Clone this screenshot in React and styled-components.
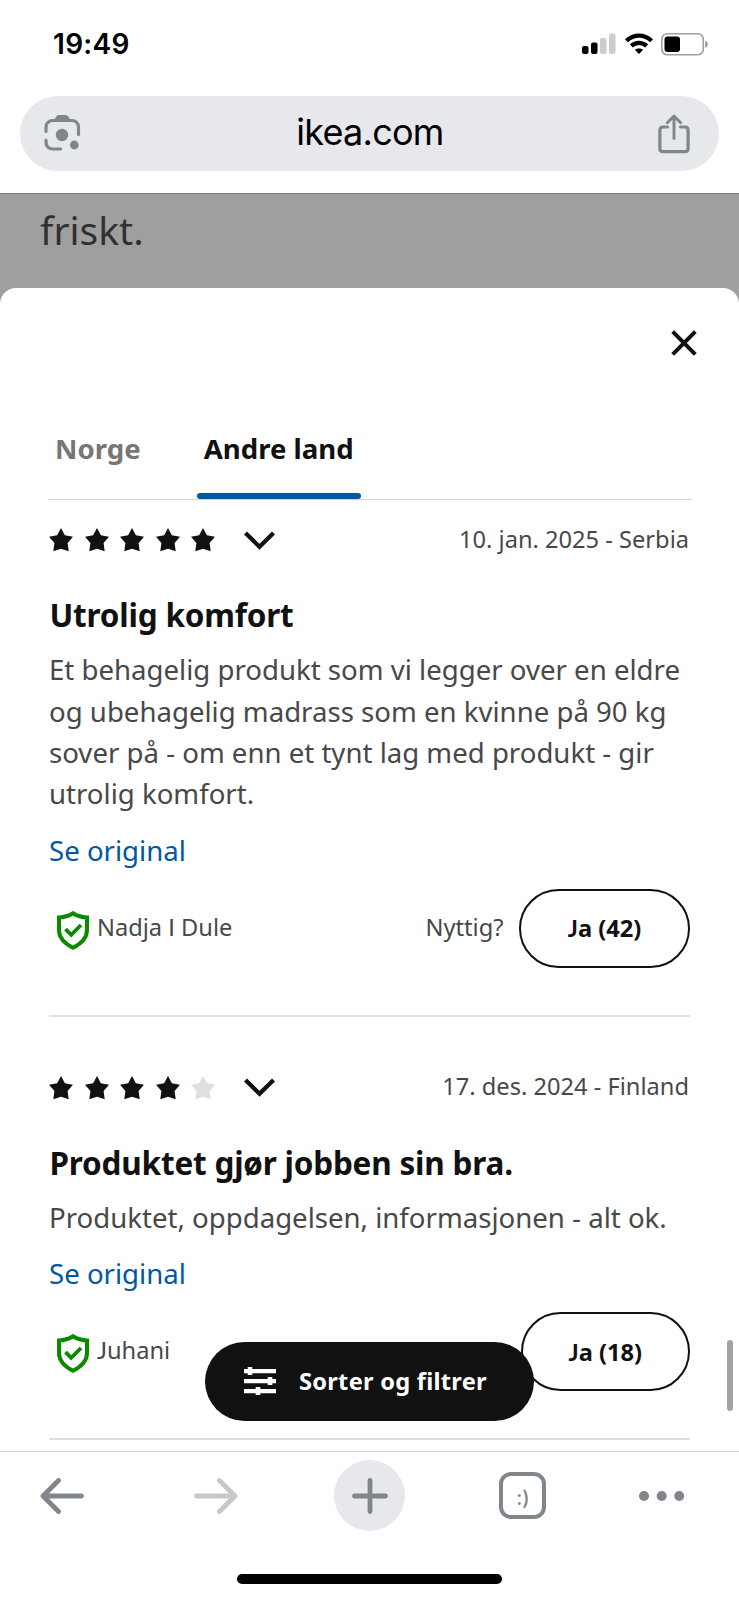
import React from "react";
import styled, { createGlobalStyle } from "styled-components";

const GlobalStyle = createGlobalStyle`
  * { box-sizing: border-box; }
  body { margin: 0; background: #fff; }
  button { font: inherit; border: 0; padding: 0; background: none; color: inherit; }
  svg { display: block; flex: none; }
`;

const Screen = styled.div`
  width: 739px;
  height: 1600px;
  display: flex;
  flex-direction: column;
  overflow: hidden;
  background: #fff;
  font-family: "Noto Sans", sans-serif;
  color: #111;
`;

const StatusBar = styled.header`
  height: 96px;
  flex: none;
  display: flex;
  justify-content: space-between;
  align-items: flex-start;
  padding: 27px 30px 0 53px;
`;

const Clock = styled.span`
  font: 600 28px/35px Inter, sans-serif;
  letter-spacing: 0.3px;
  color: #000;
`;

const StatusIcons = styled.div`
  display: flex;
  gap: 8.5px;
  padding-top: 6px;
`;

const AddressBar = styled.div`
  height: 75px;
  flex: none;
  margin: 0 20px 22px;
  padding: 0 29px 0 22px;
  border-radius: 38px;
  background: #e6e8ec;
  display: flex;
  align-items: center;
  justify-content: space-between;
`;

const Host = styled.span`
  font: 400 36px/44px Inter, sans-serif;
  letter-spacing: -0.75px;
  padding-bottom: 3px;
  color: #000;
`;

const Viewport = styled.main`
  position: relative;
  flex: 1;
  min-height: 0;
  overflow: hidden;
  background: #9f9f9f;
  border-top: 1px solid #808080;
`;

const Backdrop = styled.div`
  height: 93.5px;
  padding: 9px 40px 0;
  font-size: 39px;
  line-height: 54px;
  color: #313131;
`;

const Sheet = styled.section`
  height: 1200px;
  background: #fff;
  border-radius: 16px 16px 0 0;
  padding: 42.5px 49px 0;
`;

const SheetHeader = styled.div`
  display: flex;
  justify-content: flex-end;
  margin-right: -7px;
  height: 86px;
`;

const Tabs = styled.nav`
  display: flex;
  gap: 49px;
  height: 84px;
  margin: 0 -2px 0 -1px;
  border-bottom: 1.5px solid #d6d6d6;
`;

const Tab = styled.button`
  position: relative;
  padding: 11px 7px 0;
  height: 82.5px;
  display: flex;
  align-items: flex-start;
  font-size: 27.6px;
  line-height: 42px;
  font-weight: 700;
  color: ${(p) => (p.$active ? "#111" : "#767676")};
  &::after {
    content: "";
    display: ${(p) => (p.$active ? "block" : "none")};
    position: absolute;
    left: 0;
    right: 0;
    bottom: 0;
    height: 6px;
    border-radius: 3px;
    background: #0058a3;
  }
`;

const Review = styled.article`
  padding: ${(p) => (p.$first ? "20px" : "51px")} 0 47px;
  border-bottom: 2px solid #dfdfdf;
`;

const RatingRow = styled.div`
  display: flex;
  align-items: center;
  height: 37px;
`;

const Stars = styled.div`
  display: flex;
  gap: 11.5px;
  margin: 3px 29px 0 0;
`;

const ChevronSlot = styled.span`
  padding-top: 3px;
`;

const Small = styled.span`
  font-size: 23.65px;
  line-height: 36px;
  color: #484848;
`;

const DateText = styled(Small)`
  margin: 0 1px 0 auto;
`;

const Title = styled.h3`
  margin: 34px 0 10.9px 0.5px;
  font-size: 31.5px;
  line-height: 47.2px;
  letter-spacing: -0.2px;
  font-weight: 700;
`;

const Body = styled.p`
  margin: 0 0 15.2px;
  font-size: 27.6px;
  line-height: 41.4px;
  color: #484848;
  white-space: pre-line;
`;

const OriginalLink = styled.a`
  display: block;
  font-size: 27.6px;
  line-height: 41.4px;
  color: #0058a3;
`;

const Footer = styled.footer`
  display: flex;
  align-items: center;
  height: 78.5px;
  margin-top: 17.7px;
  padding-left: 8px;
`;

const ShieldSlot = styled.span`
  padding-top: 4px;
`;

const Author = styled(Small)`
  padding: 0 0 3px 8px;
`;

const Initial = styled.span`
  font-family: Lato, sans-serif;
`;

const Useful = styled(Small)`
  margin-left: auto;
  padding: 0 15.5px 3px 0;
`;

const VoteButton = styled.button`
  width: ${(p) => p.$width}px;
  height: 78.5px;
  border: 2px solid #111;
  border-radius: 40px;
  font-size: 23.65px;
  font-weight: 700;
`;

const FilterButton = styled.button`
  position: absolute;
  left: 205px;
  top: 1148px;
  width: 329px;
  height: 79px;
  border-radius: 40px;
  background: #111;
  color: #fff;
  display: flex;
  align-items: center;
  padding: 0 0 2px 39px;
  gap: 23px;
  font-size: 23.65px;
  letter-spacing: 0.25px;
  font-weight: 700;
`;

const ScrollThumb = styled.div`
  position: absolute;
  right: 6px;
  top: 1146px;
  width: 6px;
  height: 71px;
  border-radius: 3px;
  background: #a3a3a3;
`;

const Toolbar = styled.nav`
  height: 149px;
  flex: none;
  border-top: 1px solid #cfd2d5;
  display: flex;
  flex-direction: column;
  align-items: center;
  justify-content: space-between;
  padding: 8px 0 16px;
`;

const ToolbarRow = styled.div`
  width: 100%;
  display: grid;
  grid-template-columns: 154px 140px 165px 140px auto;
  align-items: center;
  justify-items: start;
  padding-left: 40px;
`;

const NewTab = styled.button`
  width: 71px;
  height: 71px;
  border-radius: 50%;
  background: #e6e8ec;
  display: grid;
  place-items: center;
`;

const TabCount = styled.button`
  width: 47px;
  height: 47px;
  border: 4px solid #80868b;
  border-radius: 12px;
  display: grid;
  place-items: center;
  padding: 4px 0 0 1px;
  font: 500 20px/22px Inter, sans-serif;
  color: #80868b;
`;

const HomeIndicator = styled.div`
  width: 265px;
  height: 10px;
  border-radius: 5px;
  background: #000;
`;

const Signal = () => (
  <svg width="34" height="22" viewBox="0 0 34 22">
    <rect x="0" y="13" width="6.5" height="8" rx="2" fill="#000" />
    <rect x="9" y="9.5" width="6.5" height="11.5" rx="2" fill="#000" />
    <rect x="18" y="5" width="6.5" height="16" rx="2" fill="#ccc" />
    <rect x="27" y="0.5" width="6.5" height="20.5" rx="2" fill="#ccc" />
  </svg>
);

const Wifi = () => (
  <svg width="28" height="22" viewBox="0 0 28 22">
    <g fill="none" stroke="#000" strokeWidth="4.2">
      <path d="M1.500 7.800C8.600 0.800 19.400 0.800 26.500 7.800" />
      <path d="M6.300 12.900C10.700 8.800 17.300 8.800 21.700 12.900" />
    </g>
    <path d="M14 21L9.800 16.800C12.200 14.900 15.800 14.900 18.200 16.800Z" fill="#000" />
  </svg>
);

const Battery = () => (
  <svg width="48" height="23" viewBox="0 0 48 23">
    <rect x="0.8" y="0.8" width="41.500" height="21" rx="5.500" fill="none" stroke="#a0a0a0" strokeWidth="1.600" />
    <rect x="3.500" y="3.500" width="15.500" height="15.500" rx="3" fill="#000" />
    <path d="M44.200 7.800C47.800 9 47.800 13.600 44.200 14.800Z" fill="#999" />
  </svg>
);

const Lens = () => (
  <svg width="40" height="40" viewBox="0 0 40 40">
    <g fill="none" stroke="#80868b" strokeWidth="3.2" strokeLinecap="round">
      <path d="M4 17.500V13A6.500 6.500 0 0 1 10.500 6.500H30A6.500 6.500 0 0 1 36.500 13V20.500" />
      <path d="M4 26V28.500A6.500 6.500 0 0 0 10.500 35H18.500" />
    </g>
    <path d="M11.500 6.500L14.500 2.300Q15.300 1 17 1H23.500Q25.200 1 26 2.300L29 6.500Z" fill="#80868b" />
    <circle cx="20" cy="21" r="6.200" fill="#80868b" />
    <circle cx="32.300" cy="31" r="4.400" fill="#80868b" />
  </svg>
);

const Share = () => (
  <svg width="32" height="40" viewBox="0 0 32 40">
    <g fill="none" stroke="#80868b" strokeWidth="3.2" strokeLinecap="round" strokeLinejoin="round">
      <path d="M9.500 13H5Q1.900 13 1.900 16.100V34.500Q1.900 37.600 5 37.600H27Q30.100 37.600 30.100 34.500V16.100Q30.100 13 27 13H22.500" />
      <path d="M16 24.500V2.500M9.300 8.800L16 2.100L22.700 8.800" strokeWidth="2.900" />
    </g>
  </svg>
);

const Star = ({ on }) => (
  <svg width="24" height="24" viewBox="0 0 24 24">
    <path
      d="M12 0L15.900 7.200L24 8.700L18.600 14.900L19.700 23.200L12 20.700L4.300 23.200L5.400 14.900L0 8.700L8.100 7.200Z"
      fill={on ? "#111" : "#dfdfdf"}
    />
  </svg>
);

const Chevron = () => (
  <svg width="31" height="19" viewBox="0 0 31 19">
    <path d="M1.500 2L15.500 15.700L29.500 2" fill="none" stroke="#111" strokeWidth="4.200" />
  </svg>
);

const Close = () => (
  <svg width="26" height="26" viewBox="0 0 26 26">
    <path d="M1.700 1.700L24.300 24.300M24.300 1.700L1.700 24.300" stroke="#111" strokeWidth="4" />
  </svg>
);

const Shield = () => (
  <svg width="32" height="39" viewBox="0 0 32 39">
    <g fill="none" stroke="#0a8a00" strokeWidth="4">
      <path d="M16 2.300Q9.500 6.300 2 6.500V19C2 27 7.500 32.500 16 36.700C24.500 32.500 30 27 30 19V6.500Q22.500 6.300 16 2.300Z" />
      <path d="M8.500 18.200L14.200 23.800L24 14" strokeWidth="3.800" />
    </g>
  </svg>
);

const Sliders = () => (
  <svg width="32" height="28" viewBox="0 0 32 28" fill="#fff">
    <path d="M0 2H3.700V0H8.300V2H32V6.200H8.300V8H3.700V6.200H0ZM0 12H23.700V10H28.300V12H32V16.200H28.300V18H23.700V16.200H0ZM0 22H11.700V20H16.300V22H32V26.200H16.300V28H11.700V26.200H0Z" />
  </svg>
);

const Arrow = ({ forward }) => (
  <svg width="44" height="36" viewBox="0 0 44 36">
    <path
      d={forward ? "M2.500 18H41M25.500 2.500L41 18L25.500 33.500" : "M41.500 18H3M18.500 2.500L3 18L18.500 33.500"}
      fill="none"
      stroke={forward ? "#c8c8c8" : "#80868b"}
      strokeWidth="4.800"
      strokeLinecap="round"
      strokeLinejoin="round"
    />
  </svg>
);

const Plus = () => (
  <svg width="36" height="36" viewBox="0 0 36 36">
    <path d="M18 2.500V33.500M2.500 18H33.500" stroke="#80868b" strokeWidth="4.800" strokeLinecap="round" />
  </svg>
);

const Dots = () => (
  <svg width="46" height="10" viewBox="0 0 46 10" fill="#80868b">
    <circle cx="5" cy="5" r="5" />
    <circle cx="22.700" cy="5" r="5" />
    <circle cx="40.200" cy="5" r="5" />
  </svg>
);

const reviews = [
  {
    rating: 5,
    date: "10. jan. 2025 - Serbia",
    title: "Utrolig komfort",
    body: "Et behagelig produkt som vi legger over en eldre\nog ubehagelig madrass som en kvinne på 90 kg\nsover på - om enn et tynt lag med produkt - gir\nutrolig komfort.",
    author: (
      <>
        Nadja <Initial>I</Initial> Dule
      </>
    ),
    votes: 42,
    buttonWidth: 171,
  },
  {
    rating: 4,
    date: "17. des. 2024 - Finland",
    title: "Produktet gjør jobben sin bra.",
    body: "Produktet, oppdagelsen, informasjonen - alt ok.",
    author: (
      <>
        <Initial>J</Initial>uhani
      </>
    ),
    votes: 18,
    buttonWidth: 169.5,
  },
];

export default function App() {
  return (
    <Screen>
      <GlobalStyle />
      <StatusBar>
        <Clock>19:49</Clock>
        <StatusIcons>
          <Signal />
          <Wifi />
          <Battery />
        </StatusIcons>
      </StatusBar>
      <AddressBar>
        <Lens />
        <Host>ikea.com</Host>
        <Share />
      </AddressBar>
      <Viewport>
        <Backdrop>friskt.</Backdrop>
        <Sheet>
          <SheetHeader>
            <Close />
          </SheetHeader>
          <Tabs>
            <Tab>Norge</Tab>
            <Tab $active>Andre land</Tab>
          </Tabs>
          {reviews.map((r, i) => (
            <Review key={r.title} $first={i === 0}>
              <RatingRow>
                <Stars>
                  {[1, 2, 3, 4, 5].map((n) => (
                    <Star key={n} on={n <= r.rating} />
                  ))}
                </Stars>
                <ChevronSlot>
                  <Chevron />
                </ChevronSlot>
                <DateText>{r.date}</DateText>
              </RatingRow>
              <Title>{r.title}</Title>
              <Body>{r.body}</Body>
              <OriginalLink>Se original</OriginalLink>
              <Footer>
                <ShieldSlot>
                  <Shield />
                </ShieldSlot>
                <Author>{r.author}</Author>
                {i === 0 ? <Useful>Nyttig?</Useful> : <Useful />}
                <VoteButton $width={r.buttonWidth}>
                  <Initial>J</Initial>a ({r.votes})
                </VoteButton>
              </Footer>
            </Review>
          ))}
        </Sheet>
        <FilterButton>
          <Sliders />
          Sorter og filtrer
        </FilterButton>
        <ScrollThumb />
      </Viewport>
      <Toolbar>
        <ToolbarRow>
          <Arrow />
          <Arrow forward />
          <NewTab>
            <Plus />
          </NewTab>
          <TabCount>:)</TabCount>
          <Dots />
        </ToolbarRow>
        <HomeIndicator />
      </Toolbar>
    </Screen>
  );
}
